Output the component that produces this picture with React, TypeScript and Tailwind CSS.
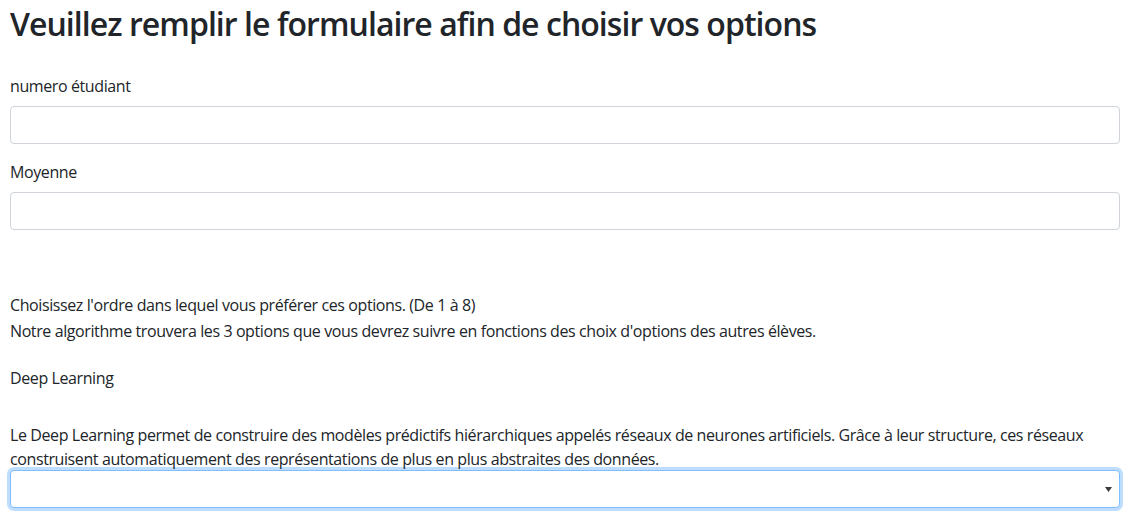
export default function App() {
  const font = { fontFamily: '"Open Sans", "Noto Sans", sans-serif' };
  return (
    <div className="min-h-[516px] w-[1133px] bg-white text-[#212529]" style={font}>
      <div className="w-[1120px] pl-[10px] pt-[5px] tracking-[-0.4px]">
        <h2 className="mb-[31px] text-[32px] font-semibold leading-[38px] tracking-[-0.95px]">
          Veuillez remplir le formulaire afin de choisir vos options
        </h2>
        <div className="mb-4">
          <label className="mb-2 block text-base leading-6">numero étudiant</label>
          <div className="h-[38px] w-full rounded border border-[#ced4da] bg-white" />
        </div>
        <div>
          <label className="mb-2 block text-base leading-6">Moyenne</label>
          <div className="h-[38px] w-full rounded border border-[#ced4da] bg-white" />
        </div>
        <div className="mt-[63px] text-base leading-6">
          <p>Choisissez l'ordre dans lequel vous préférer ces options. (De 1 à 8)</p>
          <p className="mt-[2px]">
            Notre algorithme trouvera les 3 options que vous devrez suivre en fonctions des choix d'options des autres élèves.
          </p>
        </div>
        <p className="mt-[23px] text-base leading-6">Deep Learning</p>
        <p className="mt-[33px] text-base leading-6">
          Le Deep Learning permet de construire des modèles prédictifs hiérarchiques appelés réseaux de neurones artificiels. Grâce à leur structure, ces réseaux
          <br />
          construisent automatiquement des représentations de plus en plus abstraites des données.
        </p>
        <div className="-mt-px flex h-[38px] w-full items-center justify-end rounded border border-[#80bdff] bg-white pr-[7px] shadow-[0_0_0_3px_rgba(0,123,255,0.25)]">
          <svg width="7" height="5" viewBox="0 0 7 5">
            <path d="M0 0 L7 0 L3.5 5 Z" fill="#3c3c3c" />
          </svg>
        </div>
      </div>
    </div>
  );
}
